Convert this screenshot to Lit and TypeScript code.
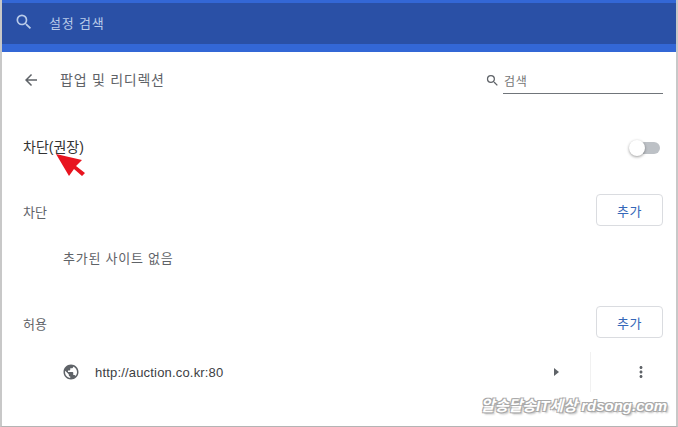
import { LitElement, css, html } from 'lit';
import { customElement } from 'lit/decorators.js';

const searchIcon = html`<svg viewBox="0 0 24 24"><path fill="currentColor" d="M15.5 14h-.79l-.28-.27A6.47 6.47 0 0 0 16 9.5 6.5 6.5 0 1 0 9.5 16c1.61 0 3.09-.59 4.23-1.57l.27.28v.79l5 4.99L20.49 19l-4.99-5zm-6 0C7.01 14 5 11.99 5 9.5S7.01 5 9.5 5 14 7.01 14 9.5 11.99 14 9.5 14z"/></svg>`;

@customElement('app-root')
export class AppRoot extends LitElement {
  static styles = css`
    :host {
      display: block;
      font-family: "Liberation Sans", "Noto Sans CJK KR", sans-serif;
    }

    .frame {
      position: relative;
      box-sizing: border-box;
      width: 678px;
      height: 427px;
      overflow: hidden;
      background: #fff;
      border-left: 2px solid #c8c8c8;
      border-right: 2px solid #c8c8c8;
      border-bottom: 1px solid #b4b4b4;
    }

    .toolbar {
      box-sizing: border-box;
      height: 52px;
      margin: 0 -2px 0 -1px;
      background: #3367d6;
      padding-top: 3px;
    }

    .toolbar-bar {
      box-sizing: border-box;
      display: flex;
      align-items: center;
      height: 41px;
      margin-left: 1px;
      padding: 0 0 3px 12px;
      background: #2a50a6;
      color: #b9cbe9;
      font-size: 13px;
      letter-spacing: 0.8px;
    }

    .toolbar-bar svg {
      width: 20px;
      height: 20px;
      margin-right: 15px;
    }

    .subpage {
      display: flex;
      align-items: center;
      height: 56px;
      padding: 0 13px 0 20px;
      color: #5f6368;
      font-size: 13px;
    }

    .back {
      width: 18px;
      height: 18px;
      margin-right: 20px;
    }

    .title {
      flex: 1;
      margin-top: -2px;
      font-size: 14px;
      letter-spacing: 0.75px;
    }

    .search {
      display: flex;
      align-items: flex-start;
      margin-top: 2px;
      font-size: 12px;
      color: #757575;
    }

    .search svg {
      width: 15px;
      height: 15px;
      margin: 4px 3px 0 0;
      color: #5f6368;
    }

    .search span {
      box-sizing: border-box;
      display: block;
      width: 160px;
      height: 25px;
      padding: 3px 0 0 1px;
      border-bottom: 1px solid #70757a;
      letter-spacing: 0.6px;
    }

    .toggle-row {
      display: flex;
      align-items: center;
      justify-content: space-between;
      height: 48px;
      margin-top: 14px;
      padding: 0 16px 0 21px;
      font-size: 14px;
      color: #333;
    }

    .toggle {
      position: relative;
      width: 29px;
      height: 12px;
      border-radius: 6px;
      background: #bdc1c6;
      margin-top: 4px;
    }

    .toggle::before {
      content: '';
      position: absolute;
      left: -2px;
      top: -2px;
      width: 16px;
      height: 16px;
      border-radius: 50%;
      background: #fff;
      box-shadow: 0 1px 3px rgba(0, 0, 0, 0.4);
    }

    .section {
      display: flex;
      align-items: center;
      justify-content: space-between;
      height: 48px;
      padding: 0 13px 0 21px;
      font-size: 13px;
      color: #5f6368;
    }

    .section span {
      margin-top: 2px;
    }

    .add {
      box-sizing: border-box;
      display: flex;
      align-items: center;
      justify-content: center;
      width: 67px;
      height: 32px;
      border: 1px solid #dadce0;
      border-radius: 4px;
      color: #3567b8;
      font-size: 13px;
      letter-spacing: 0.5px;
    }

    .first {
      margin-top: 16px;
    }

    .empty {
      height: 64px;
      padding-left: 61px;
      font-size: 13px;
      line-height: 50px;
      color: #5f6368;
      letter-spacing: 0.75px;
    }

    .site {
      display: flex;
      align-items: center;
      height: 52px;
      padding-left: 61px;
      font-size: 13px;
      color: #3c4043;
    }

    .globe {
      width: 18px;
      height: 18px;
      margin: 0 15px 0 -1px;
      color: #5f6368;
    }

    .url {
      flex: 1;
      letter-spacing: 0.18px;
    }

    .arrow {
      width: 0;
      height: 0;
      margin-right: 31px;
      border-left: 5px solid #5f6368;
      border-top: 4px solid transparent;
      border-bottom: 4px solid transparent;
    }

    .more {
      box-sizing: border-box;
      display: flex;
      align-items: center;
      width: 86px;
      height: 40px;
      padding-left: 41px;
      border-left: 1px solid #f1f1f1;
      color: #5f6368;
    }

    .more svg {
      width: 18px;
      height: 18px;
    }

    .pointer {
      position: absolute;
      left: 48px;
      top: 150px;
      width: 40px;
      height: 30px;
    }

    .watermark {
      position: absolute;
      right: 9px;
      bottom: 11px;
      font-size: 15px;
      font-weight: bold;
      font-style: italic;
      color: #fff;
      letter-spacing: 0;
      text-shadow:
        1px 1px 0 #a8a8a8, -1px 1px 0 #a8a8a8, 1px -1px 0 #a8a8a8, -1px -1px 0 #a8a8a8,
        2px 2px 2px #b8b8b8;
    }
  `;

  render() {
    return html`
      <div class="frame">
        <div class="toolbar">
          <div class="toolbar-bar">${searchIcon}<span>설정 검색</span></div>
        </div>

        <div class="subpage">
          <svg class="back" viewBox="0 0 24 24">
            <path fill="currentColor" d="M20 11H7.83l5.59-5.59L12 4l-8 8 8 8 1.41-1.41L7.83 13H20v-2z" />
          </svg>
          <div class="title">팝업 및 리디렉션</div>
          <div class="search">${searchIcon}<span>검색</span></div>
        </div>

        <div class="toggle-row">
          <span>차단(권장)</span>
          <div class="toggle"></div>
        </div>

        <div class="section first">
          <span>차단</span>
          <div class="add">추가</div>
        </div>
        <div class="empty">추가된 사이트 없음</div>

        <div class="section">
          <span>허용</span>
          <div class="add">추가</div>
        </div>
        <div class="site">
          <svg class="globe" viewBox="0 0 24 24">
            <path fill="currentColor" d="M12 2C6.48 2 2 6.48 2 12s4.48 10 10 10 10-4.48 10-10S17.52 2 12 2zm-1 17.93c-3.95-.49-7-3.85-7-7.93 0-.62.08-1.21.21-1.79L9 15v1c0 1.1.9 2 2 2v1.93zm6.9-2.54c-.26-.81-1-1.39-1.9-1.39h-1v-3c0-.55-.45-1-1-1H8v-2h2c.55 0 1-.45 1-1V7h2c1.1 0 2-.9 2-2v-.41c2.93 1.19 5 4.06 5 7.41 0 2.08-.8 3.97-2.1 5.39z" />
          </svg>
          <span class="url">http://auction.co.kr:80</span>
          <div class="arrow"></div>
          <div class="more">
            <svg viewBox="0 0 24 24">
              <path fill="currentColor" d="M12 8c1.1 0 2-.9 2-2s-.9-2-2-2-2 .9-2 2 .9 2 2 2zm0 2c-1.1 0-2 .9-2 2s.9 2 2 2 2-.9 2-2-.9-2-2-2zm0 6c-1.1 0-2 .9-2 2s.9 2 2 2 2-.9 2-2-.9-2-2-2z" />
            </svg>
          </div>
        </div>

        <svg class="pointer" viewBox="0 0 40 30">
          <path fill="#e8141f" d="M6 4 L32 10 L26 16 L35 23 L32 26 L24 19 L19 26 Z" />
        </svg>

        <div class="watermark">알송달송IT세상 rdsong.com</div>
      </div>
    `;
  }
}
